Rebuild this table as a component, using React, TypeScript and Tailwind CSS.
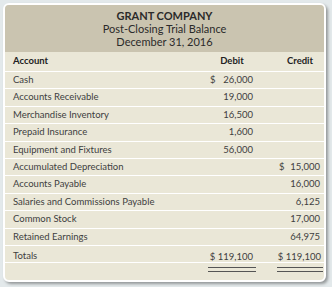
const rows: { name: string; debit?: string; credit?: string; dd?: boolean; cd?: boolean }[] = [
  { name: "Cash", debit: "26,000", dd: true },
  { name: "Accounts Receivable", debit: "19,000" },
  { name: "Merchandise Inventory", debit: "16,500" },
  { name: "Prepaid Insurance", debit: "1,600" },
  { name: "Equipment and Fixtures", debit: "56,000" },
  { name: "Accumulated Depreciation", credit: "15,000", cd: true },
  { name: "Accounts Payable", credit: "16,000" },
  { name: "Salaries and Commissions Payable", credit: "6,125" },
  { name: "Common Stock", credit: "17,000" },
  { name: "Retained Earnings", credit: "64,975" },
];

function Amount({ value, dollar }: { value?: string; dollar?: boolean }) {
  return (
    <div className="flex justify-between pl-[2px] pr-[3px]">
      <span>{dollar ? "$" : ""}</span>
      <span>{value ?? ""}</span>
    </div>
  );
}

export default function App() {
  return (
    <div className="w-[332px] h-[287px] bg-[#e3e9eb] pt-[3px] pl-[3px]" style={{ fontFamily: "Lato, 'Open Sans', sans-serif" }}>
      <div className="w-[323px] border-2 border-white rounded-[6px] overflow-hidden bg-[#eae7d7] shadow-[2px_2px_3px_rgba(0,0,0,0.35)] text-[9.5px] text-[#404040]">
        <div className="bg-[#cac4b0] pt-[4px] pb-[4px] text-center leading-[13px] text-[11px] text-[#2a2a2a]">
          <div className="font-bold">GRANT COMPANY</div>
          <div>Post-Closing Trial Balance</div>
          <div>December 31, 2016</div>
        </div>

        <div className="flex items-center h-[19px] pl-[8px] pr-[1px] font-bold text-[#222]">
          <div className="flex-1">Account</div>
          <div className="w-[48px] text-center">Debit</div>
          <div className="w-[46px] ml-[21px] text-center">Credit</div>
        </div>

        {rows.map((r) => (
          <div key={r.name} className="flex items-center h-[17.4px] border-t border-white pl-[8px] pr-[1px]">
            <div className="flex-1">{r.name}</div>
            <div className="w-[48px]">
              <Amount value={r.debit} dollar={r.dd} />
            </div>
            <div className="w-[46px] ml-[21px]">
              <Amount value={r.credit} dollar={r.cd} />
            </div>
          </div>
        ))}

        <div className="flex h-[17.4px] border-t border-white pl-[8px] pr-[1px]">
          <div className="flex-1 flex items-center pt-[4px]">Totals</div>
          <div className="w-[48px] flex flex-col">
            <div className="mt-[4px] h-[1.5px] bg-[#555]" />
            <div className="flex-1 flex items-center justify-end pr-[3px]">$ 119,100</div>
          </div>
          <div className="w-[46px] ml-[21px] flex flex-col">
            <div className="mt-[4px] h-[1.5px] bg-[#555]" />
            <div className="flex-1 flex items-center justify-end pr-[2px]">$ 119,100</div>
          </div>
        </div>

        <div className="flex h-[18px] border-t border-white pl-[8px] pr-[1px]">
          <div className="flex-1" />
          <div className="w-[48px] mt-[4px] h-[4.5px] border-y-[1.5px] border-[#555]" />
          <div className="w-[46px] ml-[21px] mt-[4px] h-[4.5px] border-y-[1.5px] border-[#555]" />
        </div>
      </div>
    </div>
  );
}
